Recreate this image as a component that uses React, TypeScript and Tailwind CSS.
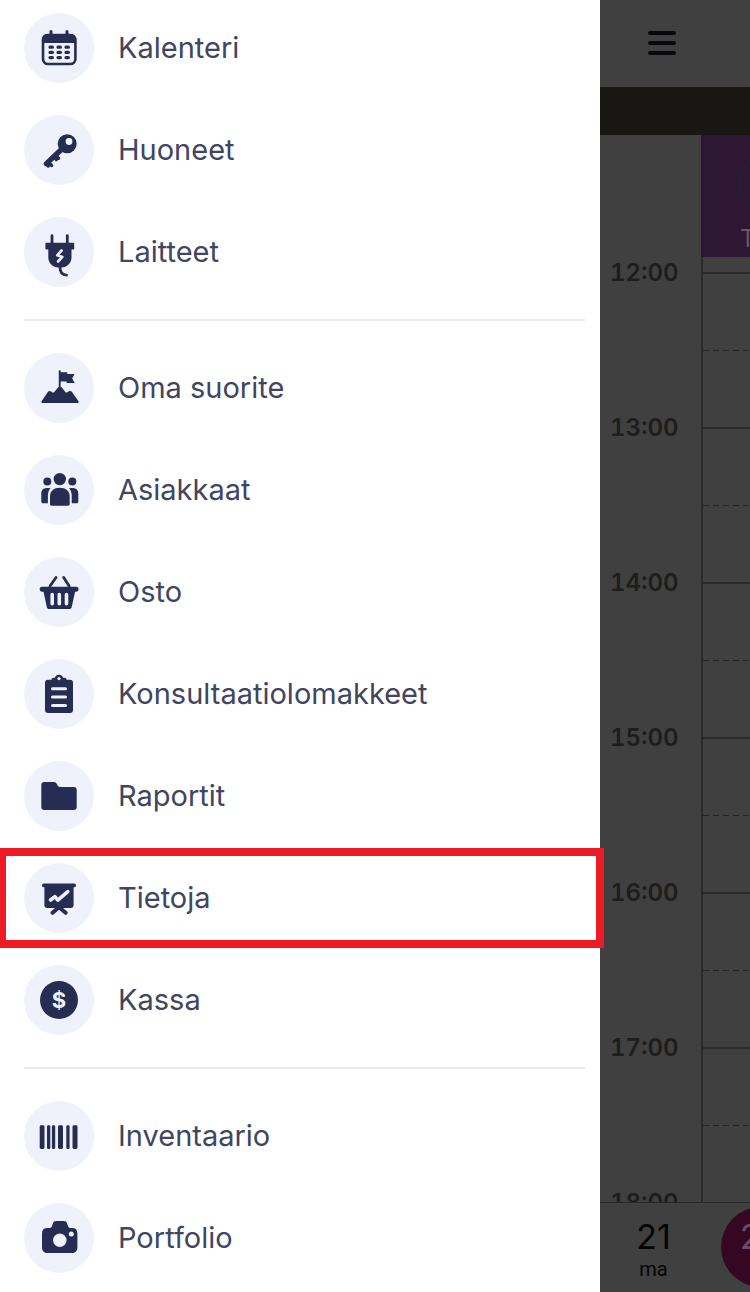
import type { ReactNode } from "react";

type MenuItem = {
  label: string;
  icon: ReactNode;
  highlighted?: boolean;
};

// All menu icons are drawn on the 70x70 disc they sit on
const icons = {
  calendar: (
    <>
      <path d="M27 18.5v5M43 18.5v5" stroke="currentColor" strokeWidth="3" strokeLinecap="round" />
      <rect x="19" y="22" width="32.4" height="29" rx="5" fill="none" stroke="currentColor" strokeWidth="2.6" />
      <path d="M18 30v-4a5 5 0 0 1 5-5h24a5 5 0 0 1 5 5v4z" fill="currentColor" />
      <path
        d="M26 34.2h2.4M34 34.2h2.4M42 34.2h2.4M26 39.4h2.4M34 39.4h2.4M42 39.4h2.4M26 44.6h2.4M34 44.6h2.4M42 44.6h2.4"
        stroke="currentColor"
        strokeWidth="3.2"
        strokeLinecap="round"
      />
    </>
  ),
  key: (
    <>
      <circle cx="43.2" cy="28.7" r="9.5" fill="currentColor" />
      <circle cx="45" cy="26.5" r="3.4" fill="#eff2fa" />
      <path d="M39 33 22.4 48.6" stroke="currentColor" strokeWidth="5.4" strokeLinecap="round" />
      <path
        d="m32.500 41 2.200 2.400M30.500 42.500l1.800 2.200M25.500 48l2.200 2.600M22.500 49.200l1.800 1.900"
        stroke="currentColor"
        strokeWidth="3.2"
        strokeLinecap="round"
      />
    </>
  ),
  plug: (
    <>
      <path d="M28 18.700v9M43.300 18.700v9" stroke="currentColor" strokeWidth="2.8" strokeLinecap="round" />
      <rect x="21.400" y="25.800" width="28.800" height="6.800" rx="1.200" fill="currentColor" />
      <path d="M24.300 31h23.200v9.500c0 5.500-4.500 10-10 10h-3.200c-5.500 0-10-4.500-10-10z" fill="currentColor" />
      <path d="M36 50c0 5 1.500 7.800 6.500 8.200" fill="none" stroke="currentColor" strokeWidth="2.800" strokeLinecap="round" />
      <path d="m37.600 33.500-4.400 4.800 5.200 1.600-4.400 4.600" fill="none" stroke="#eff2fa" strokeWidth="2.600" strokeLinecap="round" strokeLinejoin="round" />
    </>
  ),
  summit: (
    <>
      <path
        d="M18.400 50c-1 0-1.400-.9-.8-1.700l6.200-9.300c.9-1.300 2.300-1.300 3.400-.5l1.300.9c.7.4 1.300.2 1.800-.5l3.500-4.100c1.200-1.300 3-1.300 4.200 0l3.400 4.100c.5.600 1.100.8 1.800.4l1.400-.9c1.200-.8 2.500-.6 3.400.6l6.500 9.300c.5.900.1 1.700-.9 1.700z"
        fill="currentColor"
      />
      <path d="M35.700 18.200V38" stroke="currentColor" strokeWidth="1.900" strokeLinecap="round" />
      <path d="M36 19.200h7.300v1.900h7.200l-2.300 4.300 2.500 4.500h-8v-1.500H36z" fill="currentColor" />
    </>
  ),
  people: (
    <g fill="currentColor">
      <circle cx="35.800" cy="24.100" r="6.200" />
      <circle cx="23.300" cy="26.400" r="4" />
      <circle cx="48.300" cy="26.400" r="4" />
      <path d="M26 49v-7.500c0-6 4-8.800 9.800-8.800s9.900 2.800 9.900 8.800V49c0 1-.6 1.700-1.700 1.700H27.700c-1.100 0-1.700-.7-1.700-1.700z" />
      <path d="M26.600 33.300c-2 2-2.700 4.500-2.700 7.500v7.400h-5c-1 0-1.600-.6-1.600-1.500v-8c0-4.400 2.700-6.600 9.300-5.400zM45 33.300c2 2 2.700 4.500 2.700 7.500v7.400h5c1 0 1.600-.6 1.600-1.500v-8c0-4.400-2.700-6.600-9.300-5.400z" />
    </g>
  ),
  basket: (
    <>
      <path d="m32 20.500-6 8.500M39.700 20.500l5.400 8.500" stroke="currentColor" strokeWidth="2.800" strokeLinecap="round" />
      <path
        d="M18 29.800h34.500c1.300 0 2 .9 2 2.300 0 1.800-.8 2.700-2.600 2.700h-.8l-3.400 15.200c-.3 1.400-1.200 2.100-2.600 2.100H25.300c-1.400 0-2.200-.7-2.500-2.100l-3.300-15.200h-1.300c-1.600 0-2.500-.9-2.500-2.700 0-1.400.8-2.300 2.300-2.300z"
        fill="currentColor"
      />
      <path d="M28.200 37.500v9.300M35.300 37.500v9.300M42.500 37.500v9.300" stroke="#eff2fa" strokeWidth="3.600" strokeLinecap="round" />
    </>
  ),
  clipboard: (
    <>
      <rect x="21" y="20.700" width="28" height="33.400" rx="3" fill="currentColor" />
      <path d="M27.500 23v-2c0-1.400.8-2.200 2.200-2.200h1.200a4.300 4.300 0 0 1 8.200 0h1.200c1.400 0 2.200.8 2.200 2.200v2z" fill="currentColor" />
      <circle cx="35" cy="19.600" r="1.600" fill="#eff2fa" />
      <path d="M28.500 29.800h13M28.500 38.100h13M28.500 46.400h13" stroke="#eff2fa" strokeWidth="3" strokeLinecap="round" />
    </>
  ),
  folder: (
    <path
      d="M20.300 21h9.200c1.600 0 2.600.6 3.300 1.900l.7 1.400c.6 1.200 1.300 1.700 2.600 1.700h13.600c2 0 3 1 3 3v17c0 2-1 3-3 3H20.300c-2 0-3-1-3-3V24c0-2 1-3 3-3z"
      fill="currentColor"
    />
  ),
  board: (
    <>
      <rect x="18" y="20.500" width="34" height="3.800" rx="1.900" fill="currentColor" />
      <path d="M20.400 23h29.200v19c0 2-1 3-3 3H23.400c-2 0-3-1-3-3z" fill="currentColor" />
      <path d="m35 44.300-6.500 5.500M35 44.300l6.700 5.500" stroke="currentColor" strokeWidth="4" strokeLinecap="round" />
      <path d="m26.500 37 4.400-3.300 2.900 3.400 10-8.500" fill="none" stroke="#eff2fa" strokeWidth="3.600" strokeLinecap="round" strokeLinejoin="round" />
    </>
  ),
  money: (
    <>
      <circle cx="35" cy="35" r="19" fill="currentColor" />
      <text x="35" y="42.800" textAnchor="middle" fill="#eff2fa" fontSize="22" fontWeight="700" fontFamily="Inter, sans-serif">
        $
      </text>
    </>
  ),
  barcode: (
    <g fill="currentColor">
      <rect x="15.700" y="24.300" width="4.800" height="23.700" rx="1.400" />
      <rect x="23" y="24.300" width="3.300" height="23.700" rx="1.200" />
      <rect x="27.900" y="24.300" width="3.300" height="23.700" rx="1.200" />
      <rect x="34" y="24.300" width="5" height="23.700" rx="1.400" />
      <rect x="42.300" y="24.300" width="3.300" height="23.700" rx="1.200" />
      <rect x="48.500" y="24.300" width="5" height="23.700" rx="1.400" />
    </g>
  ),
  camera: (
    <>
      <path
        d="M23.500 25h1.700c1.500 0 2.300-.6 2.800-2l.9-2.600c.6-1.600 1.600-2.400 3.300-2.400h7.600c1.700 0 2.700.8 3.300 2.400L44 23c.5 1.400 1.300 2 2.800 2H48c3.600 0 5.400 1.800 5.400 5.400V44c0 4-2 6-6 6H24c-4 0-6-2-6-6V30.400c0-3.600 1.900-5.400 5.500-5.400z"
        fill="currentColor"
      />
      <circle cx="35.800" cy="37.300" r="6.700" fill="#eff2fa" />
      <circle cx="47.300" cy="31" r="2.500" fill="#eff2fa" />
    </>
  ),
};

const menuGroups: MenuItem[][] = [
  [
    { label: "Kalenteri", icon: icons.calendar },
    { label: "Huoneet", icon: icons.key },
    { label: "Laitteet", icon: icons.plug },
  ],
  [
    { label: "Oma suorite", icon: icons.summit },
    { label: "Asiakkaat", icon: icons.people },
    { label: "Osto", icon: icons.basket },
    { label: "Konsultaatiolomakkeet", icon: icons.clipboard },
    { label: "Raportit", icon: icons.folder },
    { label: "Tietoja", icon: icons.board, highlighted: true },
    { label: "Kassa", icon: icons.money },
  ],
  [
    { label: "Inventaario", icon: icons.barcode },
    { label: "Portfolio", icon: icons.camera },
  ],
];

const hours = ["12:00", "13:00", "14:00", "15:00", "16:00", "17:00", "18:00"];

const MenuLink = ({ item }: { item: MenuItem }) => (
  <a href="#" className="relative flex items-center gap-6">
    <span className="size-[70px] shrink-0 rounded-full bg-[#eff2fa] text-[#272d52]">
      <svg viewBox="0 0 70 70" className="size-full" aria-hidden="true">
        {item.icon}
      </svg>
    </span>
    <span className="text-[29px] leading-10 text-[#41455f]">{item.label}</span>

    {/* Highlight frame */}
    {item.highlighted && (
      <span className="pointer-events-none absolute -top-[15px] -right-[19px] -bottom-[15px] -left-[26px] border-8 border-[#ed1c24]" />
    )}
  </a>
);

const SideMenu = () => (
  <nav className="relative z-10 flex w-4/5 shrink-0 flex-col gap-8 bg-white pt-[13px] pr-[15px] pl-6">
    {menuGroups.map((group, index) => (
      <div
        key={index}
        className={index > 0 ? "flex flex-col gap-8 border-t-2 border-[#e8eaea] pt-8" : "flex flex-col gap-8"}
      >
        {group.map((item) => (
          <MenuLink key={item.label} item={item} />
        ))}
      </div>
    ))}
  </nav>
);

const CalendarPage = () => (
  <main className="flex min-w-0 flex-1 flex-col overflow-hidden bg-[#404040]">
    <header className="flex h-[87px] shrink-0 items-center px-12 pb-px">
      <button type="button" aria-label="Valikko" className="text-[#08080c]">
        <svg width="28" height="24" viewBox="0 0 28 24" aria-hidden="true">
          <path d="M2 2h24M2 12h24M2 22h24" stroke="currentColor" strokeWidth="4" strokeLinecap="round" />
        </svg>
      </button>
    </header>
    <div className="h-12 shrink-0 bg-[#181714]" />

    {/* Day view */}
    <div className="flex min-h-0 flex-1 overflow-hidden">
      <div className="w-[101px] shrink-0 pt-[122px]">
        {hours.map((hour) => (
          <div key={hour} className="h-[155px] pl-[10px] text-2xl leading-8 font-semibold text-[#1d1d1d] tabular-nums">
            {hour}
          </div>
        ))}
      </div>
      <div className="flex-1">
        <div className="h-[122px] overflow-hidden bg-[#2d1733] pt-5 pl-9">
          <div className="size-14 rounded-full border-4 border-[#2a1c30]" />
          <div className="mt-3 pl-[3px] text-2xl leading-8 text-[#67546c]">T</div>
        </div>
        <div className="border-l-2 border-[#2b2b2b] pt-[15px]">
          {hours.map((hour) => (
            <div key={hour} className="h-[155px] border-t-2 border-[#2b2b2b] pt-[76px]">
              <div className="h-px bg-[repeating-linear-gradient(90deg,#242424_0_6px,transparent_6px_10px)]" />
            </div>
          ))}
        </div>
      </div>
    </div>

    {/* Date strip */}
    <footer className="flex h-[90px] shrink-0 border-t border-[#292929]">
      <button type="button" className="flex w-[107px] shrink-0 flex-col items-center pt-[14px] text-[#050505]">
        <span className="text-[34px] leading-10">21</span>
        <span className="font-['Roboto',sans-serif] text-xl leading-6">ma</span>
      </button>
      <button type="button" className="flex w-[107px] shrink-0 justify-center pt-1">
        <span className="size-20 rounded-full bg-[#360723] pt-[10px] text-[34px] leading-10 text-[#70496a]">22</span>
      </button>
    </footer>
  </main>
);

const App = () => {
  return (
    <div className="flex h-screen overflow-hidden font-['Inter',sans-serif]">
      <SideMenu />
      <CalendarPage />
    </div>
  );
};

export default App;
